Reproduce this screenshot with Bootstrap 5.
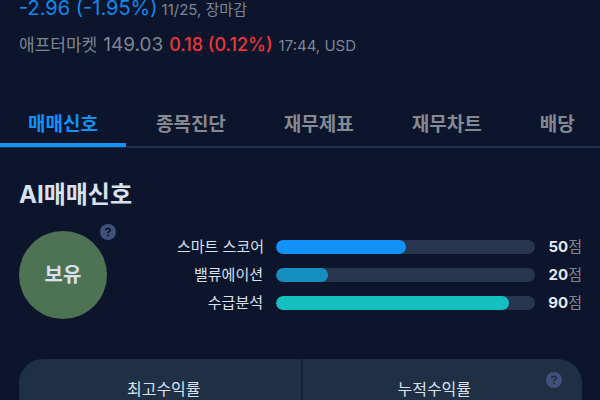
<!DOCTYPE html>
<html lang="ko">
<head>
<meta charset="utf-8">
<meta name="viewport" content="width=device-width, initial-scale=1">
<title>AI매매신호</title>
<link href="https://cdn.jsdelivr.net/npm/bootstrap@5.3.0/dist/css/bootstrap.min.css" rel="stylesheet">
<style>
body{background:#0c152b;color:#d9e0ee;font-family:Inter,"Noto Sans CJK KR",sans-serif;font-size:15px;line-height:20px;overflow:hidden}
.page-pad{padding-left:19px;padding-right:18px}
.quote-line{gap:4px;color:#7d8595;white-space:nowrap}
.change{font-size:20px;line-height:24px;color:#1389ee}
.after{font-size:19px;line-height:24px}
.market{font-size:17px;line-height:24px}
.rise{font-size:18px;line-height:24px;font-weight:500;color:#ee3538}
.quote-top{margin-top:-4px}
.quote-after{margin-top:13px;gap:6px}
.tabs{margin-top:42px;gap:2px;border-bottom:2px solid #20314f}
.tabs .nav-link{padding:14px 28px 6px;margin-bottom:-1px;font-size:19px;line-height:24px;font-weight:700;color:#858992;white-space:nowrap;border-bottom:4px solid transparent}
.tabs .nav-link.active{color:#1292f8;border-color:#1292f8}
.signal-title{font-size:24px;line-height:32px;font-weight:700;margin:31px 0 20px}
.grade{width:88px;height:88px;background:#4d7254;font-size:20px;font-weight:700}
.help{width:16px;height:16px;padding:0;border:0;background:none;line-height:0}
.help svg{width:16px;height:16px}
.grade-help{top:-7px;right:-9px}
.scores{margin-left:70px;padding-top:6px;gap:8px}
.score-label{width:86px;text-align:right;white-space:nowrap;margin-right:13px}
.score-row .progress{height:14px;border-radius:7px;background:#28354f}
.score-row .progress-bar{border-radius:7px}
.bar-smart{background:#1292f8}
.bar-value{background:#148fbf}
.bar-flow{background:#14bfbf}
.score-num{width:47px;text-align:right;white-space:nowrap;color:#7d8595}
.score-num strong{color:#e3e7ef;font-weight:700}
.returns{margin-top:40px;background:#1f3044;border-radius:24px 24px 0 0;font-size:16px}
.returns .cell{padding:20px 0 20px 8px;text-align:center}
.returns .cell + .cell{padding:20px 16px 20px 0;border-left:2px solid #15213a}
.returns-help{top:13px;right:20px}
</style>
</head>
<body>
<header class="page-pad">
  <div class="quote-line quote-top d-flex align-items-baseline"><span class="change">-2.96 (-1.95%)</span><span>11/25, 장마감</span></div>
  <div class="quote-line quote-after d-flex align-items-baseline"><span class="market">애프터마켓</span><span class="after">149.03</span><span class="rise">0.18 (0.12%)</span><span>17:44, USD</span></div>
</header>
<nav class="tabs nav flex-nowrap" aria-label="종목 메뉴">
  <a class="nav-link active" aria-current="page" href="#">매매신호</a>
  <a class="nav-link" href="#">종목진단</a>
  <a class="nav-link" href="#">재무제표</a>
  <a class="nav-link" href="#">재무차트</a>
  <a class="nav-link" href="#">배당</a>
</nav>
<main class="page-pad">
  <h2 class="signal-title">AI매매신호</h2>
  <div class="d-flex align-items-start">
    <div class="position-relative flex-shrink-0">
      <div class="grade rounded-circle d-flex align-items-center justify-content-center">보유</div>
      <button type="button" class="help grade-help position-absolute" aria-label="등급 도움말"><svg viewBox="0 0 16 16" aria-hidden="true"><circle cx="8" cy="8" r="8" fill="#42517a"/><path d="M5.8 6.3C5.8 4.9 6.8 4.3 8 4.3s2.200.7 2.200 1.900C10.200 7.600 8 7.700 8 9.200" fill="none" stroke="#0c152b" stroke-width="1.700"/><circle cx="8" cy="11.500" r="1.100" fill="#0c152b"/></svg></button>
    </div>
    <div class="scores d-flex flex-column flex-grow-1">
      <div class="score-row d-flex align-items-center"><span class="score-label">스마트 스코어</span><div class="progress flex-grow-1" role="progressbar" aria-label="스마트 스코어" aria-valuenow="50" aria-valuemin="0" aria-valuemax="100"><div class="progress-bar bar-smart" style="width:50%"></div></div><span class="score-num"><strong>50</strong>점</span></div>
      <div class="score-row d-flex align-items-center"><span class="score-label">밸류에이션</span><div class="progress flex-grow-1" role="progressbar" aria-label="밸류에이션" aria-valuenow="20" aria-valuemin="0" aria-valuemax="100"><div class="progress-bar bar-value" style="width:20%"></div></div><span class="score-num"><strong>20</strong>점</span></div>
      <div class="score-row d-flex align-items-center"><span class="score-label">수급분석</span><div class="progress flex-grow-1" role="progressbar" aria-label="수급분석" aria-valuenow="90" aria-valuemin="0" aria-valuemax="100"><div class="progress-bar bar-flow" style="width:90%"></div></div><span class="score-num"><strong>90</strong>점</span></div>
    </div>
  </div>
  <section class="returns position-relative">
    <div class="row g-0">
      <div class="cell col-6">최고수익률</div>
      <div class="cell col-6">누적수익률</div>
    </div>
    <button type="button" class="help returns-help position-absolute" aria-label="수익률 도움말"><svg viewBox="0 0 16 16" aria-hidden="true"><circle cx="8" cy="8" r="8" fill="#42517a"/><path d="M5.8 6.3C5.8 4.9 6.8 4.3 8 4.3s2.200.7 2.200 1.900C10.200 7.600 8 7.700 8 9.200" fill="none" stroke="#1f3044" stroke-width="1.700"/><circle cx="8" cy="11.500" r="1.100" fill="#1f3044"/></svg></button>
  </section>
</main>
<script src="https://cdn.jsdelivr.net/npm/bootstrap@5.3.0/dist/js/bootstrap.bundle.min.js"></script>
</body>
</html>
